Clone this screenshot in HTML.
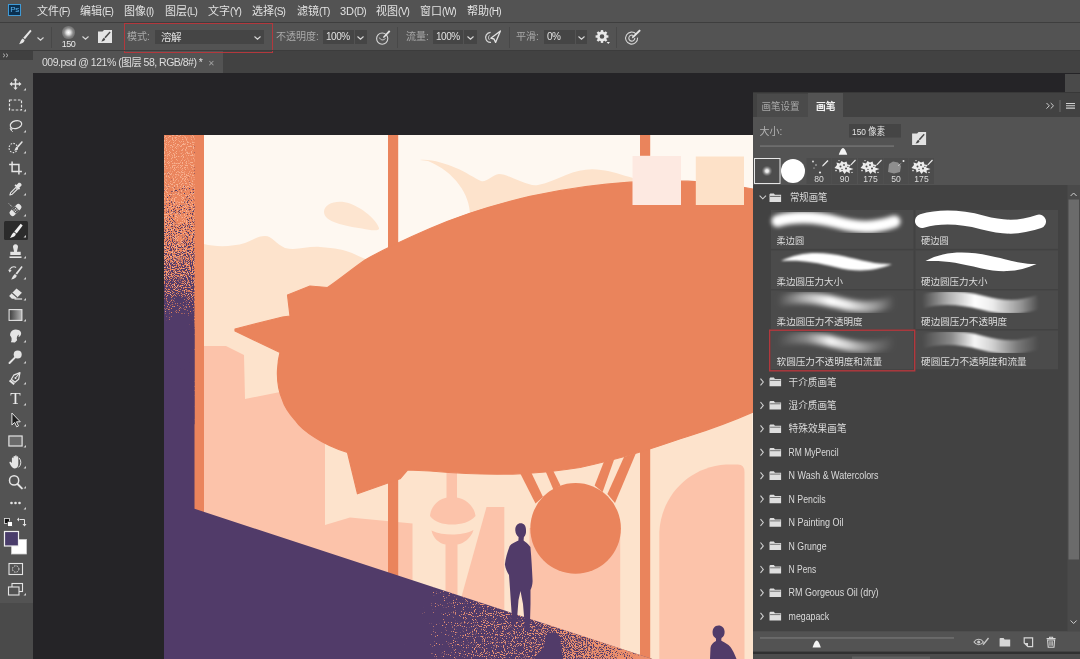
<!DOCTYPE html>
<html lang="zh-CN">
<head>
<meta charset="utf-8">
<title>Photoshop</title>
<style>
html,body{margin:0;padding:0;}
body{width:1080px;height:659px;overflow:hidden;position:relative;background:#252427;
  font-family:"Liberation Sans","Noto Sans CJK SC",sans-serif;font-size:12px;color:#dcdcdc;}
.abs{position:absolute;}
#menubar{will-change:transform;left:0;top:0;width:1080px;height:22px;background:#535353;border-bottom:1px solid #3e3e3e;box-sizing:content-box;}
#menubar span{position:absolute;top:3px;font-size:11px;line-height:16px;color:#e2e2e2;white-space:nowrap;}
#menubar span i{font-style:normal;font-size:10px;letter-spacing:-0.7px;}
#pslogo{left:8px;top:4px;width:13px;height:12px;background:#0b3050;border:1px solid #3f9ad6;box-sizing:border-box;
  color:#59b5f3;font-size:8px;line-height:10px;text-align:center;letter-spacing:-0.4px;}
#optbar{will-change:transform;left:0;top:23px;width:1080px;height:28px;background:#535353;}
#optbar .lbl{position:absolute;top:6px;line-height:16px;font-size:10px;color:#a9a9a9;white-space:nowrap;}
#optbar .fld{position:absolute;top:7px;height:14px;background:#454545;color:#e0e0e0;font-size:10px;letter-spacing:-0.45px;line-height:14px;white-space:nowrap;box-sizing:border-box;padding-left:3px;}
#optbar .sep{position:absolute;top:4px;width:1px;height:21px;background:#484848;}
#tabbar{left:0;top:51px;width:1080px;height:22px;background:#424242;}
#doctab{will-change:transform;left:33px;top:51px;width:190px;height:22px;background:#535353;color:#dedede;font-size:10.5px;letter-spacing:-0.5px;line-height:22px;white-space:nowrap;}
#toolbar{left:0;top:51px;width:33px;height:552px;background:#535353;}
#toolhead{left:0;top:51px;width:33px;height:9px;background:#404040;}
#toolbelow{left:0;top:603px;width:33px;height:56px;background:#4a4a4a;}
#panel{left:753px;top:92px;width:327px;height:567px;background:#535353;will-change:transform;}
body{-webkit-font-smoothing:antialiased;}
</style>
</head>
<body>
<!-- CANVAS ILLUSTRATION -->
<svg id="art" class="abs" style="left:164px;top:135px" width="589" height="524" viewBox="164 135 589 524">
<rect x="164" y="135" width="589" height="524" fill="#fef8f1"/>
<defs>
<linearGradient id="bandg" x1="0" y1="0" x2="0" y2="1" gradientUnits="objectBoundingBox"><stop offset="0" stop-color="#000"/><stop offset="0.1" stop-color="#101010"/><stop offset="0.2" stop-color="#4a4a4a"/><stop offset="0.4" stop-color="#7c7c7c"/><stop offset="0.55" stop-color="#b0b0b0"/><stop offset="0.66" stop-color="#ffffff"/><stop offset="1" stop-color="#ffffff"/></linearGradient>
<linearGradient id="bandl" x1="0" y1="0" x2="0" y2="1" gradientUnits="objectBoundingBox"><stop offset="0" stop-color="#747474"/><stop offset="0.7" stop-color="#787878"/><stop offset="0.9" stop-color="#606060"/><stop offset="1" stop-color="#000"/></linearGradient>
<linearGradient id="floorg" gradientUnits="userSpaceOnUse" x1="415" y1="0" x2="655" y2="0"><stop offset="0" stop-color="#000"/><stop offset="0.08" stop-color="#3a3a3a"/><stop offset="0.28" stop-color="#666666"/><stop offset="0.55" stop-color="#727272"/><stop offset="1" stop-color="#7c7c7c"/></linearGradient>
<linearGradient id="floorg2" gradientUnits="userSpaceOnUse" x1="500" y1="0" x2="655" y2="0"><stop offset="0" stop-color="#000"/><stop offset="0.2" stop-color="#404040"/><stop offset="0.5" stop-color="#808080"/><stop offset="0.8" stop-color="#b8b8b8"/><stop offset="1" stop-color="#e0e0e0"/></linearGradient>
<filter id="disP" x="0" y="0" width="1" height="1" color-interpolation-filters="sRGB">
<feTurbulence type="fractalNoise" baseFrequency="0.95" numOctaves="1" seed="11" result="t"/>
<feColorMatrix in="t" type="matrix" values="-1.6 0 0 0 1.3  -1.6 0 0 0 1.3  -1.6 0 0 0 1.3  0 0 0 0 1" result="inv"/>
<feComposite in="SourceGraphic" in2="inv" operator="arithmetic" k1="0" k2="0.5" k3="0.5" k4="0" result="sum"/>
<feColorMatrix in="sum" type="matrix" values="0 0 0 0 0.318  0 0 0 0 0.231  0 0 0 0 0.412  14 0 0 0 -7"/>
<feComposite in2="SourceAlpha" operator="in"/>
</filter>
<filter id="disL" x="0" y="0" width="1" height="1" color-interpolation-filters="sRGB">
<feTurbulence type="fractalNoise" baseFrequency="0.9" numOctaves="1" seed="4" result="t"/>
<feColorMatrix in="t" type="matrix" values="-1.6 0 0 0 1.3  -1.6 0 0 0 1.3  -1.6 0 0 0 1.3  0 0 0 0 1" result="inv"/>
<feComposite in="SourceGraphic" in2="inv" operator="arithmetic" k1="0" k2="0.5" k3="0.5" k4="0" result="sum"/>
<feColorMatrix in="sum" type="matrix" values="0 0 0 0 0.97  0 0 0 0 0.69  0 0 0 0 0.56  14 0 0 0 -7"/>
<feComposite in2="SourceAlpha" operator="in"/>
</filter>
<filter id="disO" x="0" y="0" width="1" height="1" color-interpolation-filters="sRGB">
<feTurbulence type="fractalNoise" baseFrequency="0.95" numOctaves="1" seed="23" result="t"/>
<feColorMatrix in="t" type="matrix" values="-1.6 0 0 0 1.3  -1.6 0 0 0 1.3  -1.6 0 0 0 1.3  0 0 0 0 1" result="inv"/>
<feComposite in="SourceGraphic" in2="inv" operator="arithmetic" k1="0" k2="0.5" k3="0.5" k4="0" result="sum"/>
<feColorMatrix in="sum" type="matrix" values="0 0 0 0 0.93  0 0 0 0 0.56  0 0 0 0 0.42  14 0 0 0 -7"/>
<feComposite in2="SourceAlpha" operator="in"/>
</filter>
<filter id="disO2" x="0" y="0" width="1" height="1" color-interpolation-filters="sRGB">
<feTurbulence type="fractalNoise" baseFrequency="0.9" numOctaves="1" seed="5" result="t"/>
<feColorMatrix in="t" type="matrix" values="-1.6 0 0 0 1.3  -1.6 0 0 0 1.3  -1.6 0 0 0 1.3  0 0 0 0 1" result="inv"/>
<feComposite in="SourceGraphic" in2="inv" operator="arithmetic" k1="0" k2="0.5" k3="0.5" k4="0" result="sum"/>
<feColorMatrix in="sum" type="matrix" values="0 0 0 0 0.92  0 0 0 0 0.58  0 0 0 0 0.46  14 0 0 0 -7"/>
<feComposite in2="SourceAlpha" operator="in"/>
</filter>
</defs>
<path d="M324 212 C324 203 338 199 350 203.5 C362 208 376 219 379 228 C380 231 372 231 362 228.5 C345 226 324 222 324 212 Z" fill="#fde5d0"/>
<path d="M420 160 C432 159 446 164 456 168 C466 172 474 178 481 181 C486 183 492 175 499 174 C505 174 512 178 520 181 C528 184 533 186 538 185 C548 183 556 179 566 175 C578 170 590 168 601 170 C612 171 622 175 633 178 L633 200 L470 215 C470 195 455 172 428 161 Z" fill="#fde3cc"/>
<path d="M204 244 C215 247 232 247 245 243 C253 240 258 236 265 236 C272 236 276 244 285 248 C296 251 308 246 320 247 C335 248 345 250 352 253 C360 257 368 260 375 262 L420 240 L752.5 380 L753 659 L204 659 Z" fill="#fde3cc"/>
<path d="M204 346 L226 346 L244 355 L245 399 L325 383 L325 600 L204 600 Z" fill="#fcc3aa"/>
<path d="M325 525 L350 517.5 L412.5 523.5 L412.5 600 L325 600 Z" fill="#fcc3aa"/>
<rect x="446.5" y="440" width="10.5" height="60" fill="#fcc3aa"/>
<path d="M430 516 C431 505 440 497 452 497 C464 497 474 505 475.5 516 C470 522.5 461 524.5 452 524.5 C443 524.5 434 522 430 516 Z" fill="#fcc3aa"/>
<path d="M431.5 530.5 C438 533.5 445 534.5 452 534.5 C459 534.5 467 533.5 473.5 530 C471 538 464 543.5 457.5 544.5 L457.5 600 L445.5 600 L445.5 544.5 C439 543.5 433 538 431.5 530.5 Z" fill="#fcc3aa"/>
<path d="M486.5 507 L504.3 507 L504.3 620 L455 620 Z" fill="#fcc3aa"/>
<rect x="529.5" y="528" width="90.7" height="131" fill="#fcc3aa"/>
<path d="M659.3 659 L659.3 532 C661 497 688 467 726 464.6 L738 464.6 Q744.5 465 744.5 472 L744.5 659 Z" fill="#fcc3aa"/>
<rect x="164" y="135" width="40" height="400" fill="#ea845c"/>
<rect x="388" y="135" width="10.2" height="460" fill="#ea845c"/>
<rect x="640" y="135" width="10.2" height="20.8" fill="#ea845c"/>
<rect x="640" y="440" width="10.2" height="219" fill="#ea845c"/>
<path d="M287.5 295 L310 286 L327.5 287.5 C340 279 352 269 365 260 C385 248.5 408 238 430 228.5 C462 214.5 495 204.5 530 196.3 C565 189 600 184 630 182.2 C650 181 670 180.8 688 181.2 C710 182 732 185 753 189 L753 412 C735 420 712 428.5 689 436 C670 442 650 449.5 630 455 C612 460 596 464 580 467.5 C558 471 538 473 517.5 473.8 C490 475 460 473.5 430 471 L407.5 470 L400 478.8 L357.5 493.8 L347.5 452.5 C335 448.5 324 443.5 315 437.5 C306 432 299 426 295 420 C288 412 284 405 282.5 400 C279 392 277 381 277.5 370 C277.8 364 278.5 358 280 352.5 L235 331 L235 329 L282.5 317 L290 316 Z" fill="#ea845c" stroke="#ea845c" stroke-width="1.2" stroke-linejoin="round"/>
<path d="M519.5 472 L531 472 L543 497 L535.5 503.5 Z" fill="#ea845c"/>
<path d="M545.5 471 L552.6 469.5 L560.5 485.5 L553.5 490 Z" fill="#ea845c"/>
<path d="M604 461.5 L614.3 459 L602.6 492 L594.6 485.5 Z" fill="#ea845c"/>
<path d="M624 457 L636 453 L615 503 L607.4 494 Z" fill="#ea845c"/>
<circle cx="575.6" cy="528.4" r="45.3" fill="#ea845c"/>
<rect x="632.5" y="156" width="48.5" height="49" fill="#fde9e1"/>
<rect x="695.8" y="156.5" width="48.2" height="48.5" fill="#fde1c8"/>
<path d="M164 326 L194.5 326 L194.5 508.75 L652.3 659 L164 659 Z" fill="#513b69"/>
<rect x="164" y="135" width="30.5" height="191" fill="url(#bandl)" filter="url(#disL)"/>
<rect x="164" y="135" width="30.5" height="290" fill="url(#bandg)" filter="url(#disP)"/>
<clipPath id="floorclip"><path d="M380 569.6 L652.3 659 L380 659 Z"/></clipPath>
<g clip-path="url(#floorclip)"><rect x="380" y="560" width="273" height="99" fill="url(#floorg)" filter="url(#disO2)"/><rect x="380" y="560" width="273" height="99" fill="url(#floorg2)" filter="url(#disO)"/></g>
<path d="M520.6 523.3 C517.5 523.3 515 526 515.3 530.5 C515.5 533.5 517 536 518.6 537 L518.4 540.5 C515 542 511.5 543.5 509.7 546 C507.5 552 505.5 558 504.9 564.5 C505.5 569 507.5 572.5 509 575 L510 589 L511.2 607 L512 619 L510.5 624.5 L515.5 624.8 L517 619 L518.5 600 L520.5 591 L523 604 L524.5 622 L524 629.8 L529.5 630.2 L530 622 L530.5 604 L530.5 590 C531.5 588 532.5 585 532.6 581 C532 570 531.5 558 530.4 547 C528 543.5 525.5 542 523.6 540.5 L523.9 537 C525.5 535.5 526.3 533 526 530 C526 526 524 523.3 520.6 523.3 Z" fill="#513b69"/>
<path d="M552 632.5 C547 632.5 544.5 637 545 642 C545 646 543 649 538 653 L534 659 L563 659 L562 652 C560.5 648 560.7 644 560.5 640 C560 635 556.5 632.5 552 632.5 Z" fill="#513b69"/>
<path d="M718.6 625.6 C714.5 625.6 712.3 629 712.6 633 C712.6 635.5 714 637 716 638.5 L716 641 C713 642.5 710.8 645 710.5 648 L710 659 L736.5 659 C734 652 731 647 728.5 645 C726 643 723 642 721.2 640.5 L721.5 638 C724 636.5 724.8 634 724.6 631.5 C724.4 628 722 625.6 718.6 625.6 Z" fill="#513b69"/>
</svg>

<!-- MENU BAR -->
<div id="menubar" class="abs">
<div id="pslogo" class="abs">Ps</div>
<span style="left:37px">文件<i>(F)</i></span>
<span style="left:80px">编辑<i>(E)</i></span>
<span style="left:124px">图像<i>(I)</i></span>
<span style="left:165px">图层<i>(L)</i></span>
<span style="left:208px">文字<i>(Y)</i></span>
<span style="left:252px">选择<i>(S)</i></span>
<span style="left:297px">滤镜<i>(T)</i></span>
<span style="left:340px">3D<i>(D)</i></span>
<span style="left:376px">视图<i>(V)</i></span>
<span style="left:420px">窗口<i>(W)</i></span>
<span style="left:467px">帮助<i>(H)</i></span>
</div>

<!-- OPTIONS BAR -->
<div id="optbar" class="abs">

<!-- brush tool icon -->
<svg class="abs" style="left:17px;top:6px" width="16" height="17" viewBox="0 0 16 17">
<path d="M13.2 0.8 L14.6 2 L8 10.2 L6.2 8.8 Z" fill="#e6e6e6"/>
<path d="M5.6 9.4 L7.6 11 C7.4 13.2 5.4 14.6 2 15.2 C3.4 13.8 3.2 11.2 5.6 9.4 Z" fill="#e6e6e6"/>
</svg>
<svg class="abs" style="left:37px;top:14px" width="7" height="4" viewBox="0 0 7 4"><path d="M0.5 0.5 L3.5 3.2 L6.5 0.5" fill="none" stroke="#d8d8d8" stroke-width="1.1"/></svg>
<div class="sep" style="left:51px"></div>
<!-- brush preview -->
<div class="abs" style="left:62px;top:3px;width:12.6px;height:12.6px;border-radius:50%;background:radial-gradient(circle,#ffffff 0%,#e0e0e0 22%,rgba(190,190,190,0.5) 50%,rgba(83,83,83,0) 95%)"></div>
<div class="abs" style="left:58px;top:16px;width:21px;text-align:center;font-size:9px;letter-spacing:-0.5px;line-height:10px;color:#e8e8e8">150</div>
<svg class="abs" style="left:82px;top:13px" width="7" height="4" viewBox="0 0 7 4"><path d="M0.5 0.5 L3.5 3.2 L6.5 0.5" fill="none" stroke="#d8d8d8" stroke-width="1.1"/></svg>
<!-- brush settings icon -->
<svg class="abs" style="left:97px;top:6px" width="16" height="15" viewBox="0 0 16 15">
<path d="M1 2.4 L1 14 L15 14 L15 1 L7 1 L5.6 2.4 Z" fill="#e4e4e4"/>
<path d="M12.6 2.6 L13.6 3.5 L8.6 9.3 L7.4 8.3 Z" fill="#4a4a4a"/>
<path d="M6.9 8.8 L8.2 9.9 C8 11.4 6.6 12.3 4.2 12.6 C5.2 11.6 5.2 10 6.9 8.8 Z" fill="#4a4a4a"/>
</svg>
<!-- red highlight box -->

<span class="lbl" style="left:127px">模式:</span>
<div class="fld" style="left:155px;width:109px;padding-left:6px;font-size:10.5px">溶解</div>
<svg class="abs" style="left:254px;top:13px" width="7" height="4" viewBox="0 0 7 4"><path d="M0.5 0.5 L3.5 3.2 L6.5 0.5" fill="none" stroke="#d8d8d8" stroke-width="1.1"/></svg>
<span class="lbl" style="left:276px">不透明度:</span>
<div class="fld" style="left:323px;width:31px">100%</div>
<div class="fld" style="left:355px;width:12px;padding:0"></div>
<svg class="abs" style="left:357px;top:13px" width="7" height="4" viewBox="0 0 7 4"><path d="M0.5 0.5 L3.5 3.2 L6.5 0.5" fill="none" stroke="#d8d8d8" stroke-width="1.1"/></svg>
<!-- pressure opacity icon -->
<svg class="abs" style="left:375px;top:6px" width="17" height="17" viewBox="0 0 17 17">
<circle cx="7.2" cy="9.6" r="5.6" fill="none" stroke="#d6d6d6" stroke-width="1.1"/>
<path d="M4.4 8.6 C5.6 11.4 8.8 11.6 10.4 9.4" fill="none" stroke="#d6d6d6" stroke-width="1"/>
<path d="M14 1.2 L15.4 2.6 L9.6 8.4 L8 9 L8.6 7.2 Z" fill="#e2e2e2"/>
</svg>
<div class="sep" style="left:397px"></div>
<span class="lbl" style="left:406px">流量:</span>
<div class="fld" style="left:433px;width:30px">100%</div>
<div class="fld" style="left:464px;width:13px;padding:0"></div>
<svg class="abs" style="left:467px;top:13px" width="7" height="4" viewBox="0 0 7 4"><path d="M0.5 0.5 L3.5 3.2 L6.5 0.5" fill="none" stroke="#d8d8d8" stroke-width="1.1"/></svg>
<!-- airbrush icon -->
<svg class="abs" style="left:484px;top:7px" width="18" height="15" viewBox="0 0 18 15">
<path d="M6.6 2.4 C2.6 2.8 0.8 6.4 2 9.4 C2.8 11.6 5 12.6 7 12.4" fill="none" stroke="#d6d6d6" stroke-width="1.2"/>
<path d="M5.4 5.4 C4.2 6.6 4.2 8.6 5.4 9.8" fill="none" stroke="#d6d6d6" stroke-width="1"/>
<path d="M16.4 1 L11.6 12.4 L10 9 L6.8 8.2 Z" fill="none" stroke="#e2e2e2" stroke-width="1.3" stroke-linejoin="round"/>
</svg>
<div class="sep" style="left:509px"></div>
<span class="lbl" style="left:516px">平滑:</span>
<div class="fld" style="left:544px;width:31px">0%</div>
<div class="fld" style="left:576px;width:11px;padding:0"></div>
<svg class="abs" style="left:578px;top:13px" width="7" height="4" viewBox="0 0 7 4"><path d="M0.5 0.5 L3.5 3.2 L6.5 0.5" fill="none" stroke="#d8d8d8" stroke-width="1.1"/></svg>
<!-- gear -->
<svg class="abs" style="left:595px;top:6px" width="16" height="16" viewBox="0 0 16 16">
<g transform="translate(7,7.5)">
<circle r="3.6" fill="none" stroke="#e8e8e8" stroke-width="2.6"/>
<g fill="#e8e8e8">
<rect x="-1.2" y="-6.4" width="2.4" height="2.6"/>
<rect x="-1.2" y="3.8" width="2.4" height="2.6"/>
<rect x="-6.4" y="-1.2" width="2.6" height="2.4"/>
<rect x="3.8" y="-1.2" width="2.6" height="2.4"/>
<rect x="-1.2" y="-6.4" width="2.4" height="2.6" transform="rotate(45)"/>
<rect x="-1.2" y="3.8" width="2.4" height="2.6" transform="rotate(45)"/>
<rect x="-6.4" y="-1.2" width="2.6" height="2.4" transform="rotate(45)"/>
<rect x="3.8" y="-1.2" width="2.6" height="2.4" transform="rotate(45)"/>
</g></g>
<path d="M11.6 13 L15 13 L13.3 15 Z" fill="#e8e8e8"/>
</svg>
<div class="sep" style="left:616px"></div>
<!-- target icon -->
<svg class="abs" style="left:624px;top:5px" width="18" height="18" viewBox="0 0 18 18">
<path d="M12.2 6.2 A6 6 0 1 0 13.6 9.6" fill="none" stroke="#d6d6d6" stroke-width="1.1"/>
<path d="M9.4 7.6 A3 3 0 1 0 10.8 10" fill="none" stroke="#d6d6d6" stroke-width="1.1"/>
<path d="M15.4 1.4 L16.8 2.8 L10 9.6 L7.8 10.4 L8.6 8.2 Z" fill="#e4e4e4"/>
</svg>

</div>

<!-- TAB BAR -->
<div id="tabbar" class="abs"></div>
<div id="doctab" class="abs"><span style="margin-left:9px">009.psd @ 121% (图层 58, RGB/8#) *</span><span style="margin-left:6px;color:#a0a0a0;font-size:8px;letter-spacing:0">✕</span></div>

<div class="abs" style="left:123.5px;top:23px;width:149.5px;height:30px;border:1.5px solid #b3383d;box-sizing:border-box"></div>
<div class="abs" style="left:1065px;top:74px;width:15px;height:18px;background:#4a4a4a"></div>
<div class="abs" style="left:0;top:50px;width:1080px;height:1px;background:#3c3c3c"></div>
<!-- TOOLBAR -->
<div id="toolbar" class="abs"></div>
<div id="toolhead" class="abs"></div>
<div id="toolbelow" class="abs"></div>
<svg class="abs" style="left:0;top:0" width="33" height="659" viewBox="0 0 33 659">
<g transform="translate(15.5,84)"><path d="M0 -6 L2.2 -3.4 L0.7 -3.4 L0.7 -0.7 L3.4 -0.7 L3.4 -2.2 L6 0 L3.4 2.2 L3.4 0.7 L0.7 0.7 L0.7 3.4 L2.2 3.4 L0 6 L-2.2 3.4 L-0.7 3.4 L-0.7 0.7 L-3.4 0.7 L-3.4 2.2 L-6 0 L-3.4 -2.2 L-3.4 -0.7 L-0.7 -0.7 L-0.7 -3.4 L-2.2 -3.4 Z" fill="#e4e4e4"/><path d="M10.5 4 L10.5 6.5 L8 6.5 Z" fill="#cfcfcf"/></g>
<g transform="translate(15.5,105)"><rect x="-6" y="-5" width="12" height="10" fill="none" stroke="#e4e4e4" stroke-width="1.2" stroke-dasharray="2.6 1.6"/><path d="M10.5 4 L10.5 6.5 L8 6.5 Z" fill="#cfcfcf"/></g>
<g transform="translate(15.5,126)"><ellipse cx="0.8" cy="-1.2" rx="5.8" ry="3.8" fill="none" stroke="#e4e4e4" stroke-width="1.2" transform="rotate(-14)"/><path d="M-4.4 1.2 C-6 2.4 -5 4.4 -3.4 3.4 C-2.4 2.6 -3.6 1.4 -4.4 2.2 C-5 3.4 -4.4 5 -2.8 5.6" fill="none" stroke="#e4e4e4" stroke-width="1"/><path d="M10.5 4 L10.5 6.5 L8 6.5 Z" fill="#cfcfcf"/></g>
<g transform="translate(15.5,147)"><ellipse cx="-2.2" cy="1" rx="4.2" ry="4.6" fill="none" stroke="#e4e4e4" stroke-width="1.1" stroke-dasharray="1.6 1.3"/><path d="M6.4 -6 L7.4 -5 L2.8 0.6 L1.4 -0.6 Z" fill="#e4e4e4"/><path d="M1 -0.2 L2.6 1.2 C2.2 2.8 0.6 3.4 -1.4 3.6 C-0.2 2.6 -0.4 1 1 -0.2 Z" fill="#e4e4e4"/><path d="M10.5 4 L10.5 6.5 L8 6.5 Z" fill="#cfcfcf"/></g>
<g transform="translate(15.5,168)"><path d="M-3.4 -6.4 L-3.4 3.4 L6.4 3.4 M-6.4 -3.4 L3.4 -3.4 L3.4 6.4" fill="none" stroke="#e4e4e4" stroke-width="1.5"/><path d="M10.5 4 L10.5 6.5 L8 6.5 Z" fill="#cfcfcf"/></g>
<g transform="translate(15.5,189)"><path d="M3.2 -6.2 C4.6 -7 6.8 -4.8 6 -3.4 L3.8 -1.2 L4.6 -0.4 L3.4 0.8 L-1 -3.6 L0.2 -4.8 L1 -4 Z" fill="#e4e4e4"/><path d="M0.4 -1.6 L2 0 L-3.2 5.2 L-5.6 6 L-4.8 3.6 Z" fill="none" stroke="#e4e4e4" stroke-width="1.1" stroke-linejoin="round"/><path d="M10.5 4 L10.5 6.5 L8 6.5 Z" fill="#cfcfcf"/></g>
<g transform="translate(15.5,210)"><g transform="rotate(-45)"><rect x="-7" y="-3" width="14" height="6" rx="2.6" fill="#e4e4e4"/><rect x="-2.4" y="-3" width="4.8" height="6" fill="#535353"/><circle cx="-1" cy="-1" r="0.6" fill="#e4e4e4"/><circle cx="1" cy="-1" r="0.6" fill="#e4e4e4"/><circle cx="-1" cy="1" r="0.6" fill="#e4e4e4"/><circle cx="1" cy="1" r="0.6" fill="#e4e4e4"/></g><path d="M-6.6 -6.4 L-3.4 -3.2" stroke="#e4e4e4" stroke-width="1" stroke-dasharray="1 1"/><path d="M10.5 4 L10.5 6.5 L8 6.5 Z" fill="#cfcfcf"/></g>
<rect x="4" y="221" width="24" height="19" rx="1.5" fill="#2b2b2b"/>
<g transform="translate(15.5,231)"><path d="M5.2 -7.2 L7.2 -5.6 L1.2 2.4 L-1.2 0.4 Z" fill="#f2f2f2"/><path d="M-1.6 1.2 L0.4 2.8 C0.2 5 -2 6.4 -5.6 7 C-4.2 5.6 -4.2 3 -1.6 1.2 Z" fill="#f2f2f2"/><path d="M10.5 4 L10.5 6.5 L8 6.5 Z" fill="#cfcfcf"/></g>
<g transform="translate(15.5,252)"><path d="M-2.4 -4.6 A2.5 2.5 0 1 1 2.4 -4.6 L1.4 -0.2 L5.2 -0.2 L5.2 3 L-5.2 3 L-5.2 -0.2 L-1.4 -0.2 Z" fill="#e4e4e4"/><rect x="-6" y="4.4" width="12" height="1.6" fill="#e4e4e4"/><path d="M10.5 4 L10.5 6.5 L8 6.5 Z" fill="#cfcfcf"/></g>
<g transform="translate(15.5,273)"><path d="M6 -7 L7.2 -6 L1.6 1.6 L0 0.4 Z" fill="#e4e4e4"/><path d="M-0.6 1 L1.2 2.4 C1 4.6 -1 5.8 -4.4 6.4 C-3 5 -3 2.8 -0.6 1 Z" fill="#e4e4e4"/><path d="M-6 -2 A4.4 4.4 0 0 1 0.6 -5.6" fill="none" stroke="#e4e4e4" stroke-width="1.1"/><path d="M-7.4 -3.2 L-5.8 -0.6 L-3.8 -2.8 Z" fill="#e4e4e4"/><path d="M10.5 4 L10.5 6.5 L8 6.5 Z" fill="#cfcfcf"/></g>
<g transform="translate(15.5,294)"><path d="M1 -5.6 L6.4 -1.2 L0.6 4.8 L-3.6 4.8 L-6.4 2 Z" fill="#e4e4e4"/><path d="M-3.4 -1 L1.8 3.6" stroke="#535353" stroke-width="1.1"/><rect x="-1" y="4.4" width="7.6" height="1.2" fill="#e4e4e4"/><path d="M10.5 4 L10.5 6.5 L8 6.5 Z" fill="#cfcfcf"/></g>
<defs><linearGradient id="tg" x1="0" x2="1"><stop offset="0" stop-color="#3c3c3c"/><stop offset="1" stop-color="#b4b4b4"/></linearGradient></defs>
<g transform="translate(15.5,315)"><rect x="-6.4" y="-5.4" width="12.8" height="10.8" fill="url(#tg)" stroke="#e4e4e4" stroke-width="1.1"/><path d="M10.5 4 L10.5 6.5 L8 6.5 Z" fill="#cfcfcf"/></g>
<g transform="translate(15.5,336)"><path d="M-3.2 -5.6 C-0.6 -7.2 3.4 -6.6 5 -4.6 C6.4 -2.6 5.4 0.2 3 1 L3.4 -1.4 C1.6 -0.2 0.8 1.8 1.6 4.2 L-0.6 6.6 L-4.6 6.2 C-3.4 3.6 -3.6 1.2 -5.4 -0.6 C-5.6 -2.6 -4.8 -4.6 -3.2 -5.6 Z" fill="#e4e4e4"/><path d="M10.5 4 L10.5 6.5 L8 6.5 Z" fill="#cfcfcf"/></g>
<g transform="translate(15.5,357)"><circle cx="2.2" cy="-2.4" r="4" fill="#e4e4e4"/><path d="M-0.4 0.4 L-6 6" stroke="#e4e4e4" stroke-width="2" stroke-linecap="round"/><path d="M10.5 4 L10.5 6.5 L8 6.5 Z" fill="#cfcfcf"/></g>
<g transform="translate(15.5,378)"><g transform="rotate(40)"><path d="M0 -7 L3.2 -1 L2.4 3.6 L-2.4 3.6 L-3.2 -1 Z" fill="none" stroke="#e4e4e4" stroke-width="1.2" stroke-linejoin="round"/><path d="M0 -6.4 L0 -1" stroke="#e4e4e4" stroke-width="1"/><circle cx="0" cy="0" r="1" fill="#e4e4e4"/><rect x="-3" y="4.6" width="6" height="2" fill="#e4e4e4"/></g><path d="M10.5 4 L10.5 6.5 L8 6.5 Z" fill="#cfcfcf"/></g>
<g transform="translate(15.5,399)"><text x="0" y="5.4" text-anchor="middle" font-family="Liberation Serif,serif" font-size="17" fill="#ececec">T</text><path d="M10.5 4 L10.5 6.5 L8 6.5 Z" fill="#cfcfcf"/></g>
<g transform="translate(15.5,420)"><path d="M-3.6 -7 L-3.6 5 L-0.8 2.4 L1.2 6.8 L3 6 L1 1.8 L4.8 1.8 Z" fill="#1e1e1e" stroke="#e4e4e4" stroke-width="1"/><path d="M10.5 4 L10.5 6.5 L8 6.5 Z" fill="#cfcfcf"/></g>
<g transform="translate(15.5,441)"><rect x="-6.6" y="-5" width="13.2" height="10" fill="#6a6a6a" stroke="#e4e4e4" stroke-width="1.2"/><path d="M10.5 4 L10.5 6.5 L8 6.5 Z" fill="#cfcfcf"/></g>
<g transform="translate(15.5,462)"><path d="M-3.6 1 L-3.6 -3.6 C-3.6 -4.8 -2 -4.8 -2 -3.6 L-2 -5.2 C-2 -6.4 -0.4 -6.4 -0.4 -5.2 L-0.4 -5.8 C-0.4 -7 1.2 -7 1.2 -5.8 L1.2 -4.8 C1.2 -6 2.8 -6 2.8 -4.8 L2.8 2 C2.8 4.6 1.6 6.4 -0.6 6.4 C-2.6 6.4 -3.6 5.4 -5 3 L-6 1 C-6.4 0 -5.2 -0.6 -4.4 0.2 Z" fill="#e4e4e4"/><path d="M3.6 -4 A6.5 6.5 0 0 1 3 5.4" fill="none" stroke="#e4e4e4" stroke-width="1"/><path d="M10.5 4 L10.5 6.5 L8 6.5 Z" fill="#cfcfcf"/></g>
<g transform="translate(15.5,482)"><circle cx="-1.4" cy="-1.6" r="4.6" fill="none" stroke="#e4e4e4" stroke-width="1.5"/><path d="M2 2 L6.4 6.4" stroke="#e4e4e4" stroke-width="2" stroke-linecap="round"/><path d="M10.5 4 L10.5 6.5 L8 6.5 Z" fill="#cfcfcf"/></g>
<g transform="translate(15.5,503)"><circle cx="-4" cy="0" r="1.3" fill="#e4e4e4"/><circle cx="0" cy="0" r="1.3" fill="#e4e4e4"/><circle cx="4" cy="0" r="1.3" fill="#e4e4e4"/><path d="M10.5 4 L10.5 6.5 L8 6.5 Z" fill="#cfcfcf"/></g>
<rect x="4.5" y="518.5" width="5" height="5" fill="#111" stroke="#e4e4e4" stroke-width="0.8"/><rect x="7.5" y="521.5" width="5" height="5" fill="#fff" stroke="#222" stroke-width="0.6"/>
<path d="M19.5 519.5 L24.5 519.5 L24.5 525" fill="none" stroke="#e4e4e4" stroke-width="1"/><path d="M19 517.5 L19 521.5 L17 519.5 Z M22.5 524 L26.5 524 L24.5 526.4 Z" fill="#e4e4e4"/>
<rect x="11.5" y="539.5" width="15" height="14.5" fill="#ffffff" stroke="#cfcfcf" stroke-width="0.8"/>
<rect x="4.5" y="531.5" width="14" height="14.5" fill="#4a3d6b" stroke="#f0f0f0" stroke-width="1.2"/>
<rect x="9" y="563.5" width="13.5" height="11" fill="none" stroke="#e4e4e4" stroke-width="1.1"/><circle cx="15.7" cy="569" r="3.2" fill="none" stroke="#e4e4e4" stroke-width="1" stroke-dasharray="1.4 1.2"/>
<rect x="12" y="583.5" width="10.5" height="8" fill="#535353" stroke="#e4e4e4" stroke-width="1.1"/><rect x="8.5" y="587" width="10.5" height="8" fill="#535353" stroke="#e4e4e4" stroke-width="1.1"/><path d="M26 593 L26 595.5 L23.5 595.5 Z" fill="#cfcfcf"/>
<path d="M3 53.6 L5 55.4 L3 57.2 M6 53.6 L8 55.4 L6 57.2" fill="none" stroke="#bdbdbd" stroke-width="0.9"/>
</svg>

<!-- BRUSH PANEL -->
<div id="panel" class="abs">
<svg class="abs" style="left:0;top:0" width="327" height="567" viewBox="753 92 327 567" font-family="Liberation Sans, Noto Sans CJK SC, sans-serif" font-size="9.8">
<defs>
<filter id="soft" x="-10%" y="-60%" width="120%" height="220%"><feGaussianBlur stdDeviation="2"/></filter>
<filter id="soft2" x="-10%" y="-60%" width="120%" height="220%"><feGaussianBlur stdDeviation="1.3"/></filter>
<filter id="soft3" x="-10%" y="-60%" width="120%" height="220%"><feGaussianBlur stdDeviation="2.4"/></filter>
<linearGradient id="fade" x1="0" x2="1" y1="0" y2="0"><stop offset="0" stop-color="#fff" stop-opacity="0"/><stop offset="0.22" stop-color="#fff" stop-opacity="0.55"/><stop offset="0.45" stop-color="#fff" stop-opacity="1"/><stop offset="0.6" stop-color="#fff" stop-opacity="0.9"/><stop offset="0.85" stop-color="#fff" stop-opacity="0.4"/><stop offset="1" stop-color="#fff" stop-opacity="0"/></linearGradient>
<linearGradient id="fade2" x1="0" x2="1" y1="0" y2="0"><stop offset="0" stop-color="#fff" stop-opacity="0"/><stop offset="0.25" stop-color="#fff" stop-opacity="0.35"/><stop offset="0.45" stop-color="#fff" stop-opacity="0.95"/><stop offset="0.6" stop-color="#fff" stop-opacity="0.75"/><stop offset="0.82" stop-color="#fff" stop-opacity="0.25"/><stop offset="1" stop-color="#fff" stop-opacity="0"/></linearGradient>
<radialGradient id="softdot"><stop offset="0" stop-color="#fff"/><stop offset="0.3" stop-color="#eee" stop-opacity="0.9"/><stop offset="1" stop-color="#888" stop-opacity="0"/></radialGradient>
<g id="fold"><path d="M0 1.2 L0 9 L11.6 9 L11.6 1.8 L5.4 1.8 L4.4 0.4 L0.8 0.4 Z" fill="#dedede"/><path d="M0.6 3.2 L11 3.2" stroke="#454545" stroke-width="0.7"/></g>
<path id="chevR" d="M0 0 L2.8 3.4 L0 6.8" fill="none" stroke="#cfcfcf" stroke-width="1.1"/>
</defs>
<rect x="753" y="92" width="327" height="25" fill="#424242"/>
<rect x="753" y="91" width="327" height="2" fill="#383838"/>
<rect x="757" y="94" width="51" height="23" fill="#4a4a4a"/>
<rect x="808" y="93" width="35" height="24" fill="#535353"/>
<text x="761.5" y="110" fill="#a8a8a8" textLength="38" lengthAdjust="spacingAndGlyphs">画笔设置</text>
<text x="816" y="110" fill="#f2f2f2" font-weight="bold" textLength="19.5" lengthAdjust="spacingAndGlyphs">画笔</text>
<path d="M1046.5 103 L1049.3 105.8 L1046.5 108.6 M1050.7 103 L1053.5 105.8 L1050.7 108.6" fill="none" stroke="#d0d0d0" stroke-width="1"/>
<rect x="1059.5" y="100" width="1" height="12" fill="#6a6a6a"/>
<path d="M1066 103.5 H1075 M1066 105.8 H1075 M1066 108.1 H1075" stroke="#d0d0d0" stroke-width="1.1"/>
<text x="759.5" y="135" fill="#b4b4b4" font-size="10">大小:</text>
<rect x="849" y="124" width="52" height="13.5" fill="#454545"/>
<text x="852" y="134.6" fill="#e2e2e2" font-size="9.8" textLength="33" lengthAdjust="spacingAndGlyphs">150 像素</text>
<g transform="translate(911.5,131)"><path d="M0.6 2.4 L0.6 14 L14.6 14 L14.6 1 L7 1 L5.6 2.4 Z" fill="#e2e2e2"/><path d="M12.2 2.8 L13.2 3.7 L8.4 9.3 L7.2 8.3 Z" fill="#4a4a4a"/><path d="M6.7 8.8 L8 9.9 C7.8 11.4 6.4 12.3 4 12.6 C5 11.6 5 10 6.7 8.8 Z" fill="#4a4a4a"/></g>
<rect x="760" y="145.3" width="134" height="1.6" fill="#717171"/>
<path d="M843 148 C844.6 148 846.6 152.6 847.2 154.8 L838.8 154.8 C839.4 152.6 841.4 148 843 148 Z" fill="#f4f4f4"/>
<rect x="754.5" y="158.5" width="25.5" height="25" fill="#4d4d4d" stroke="#e6e6e6" stroke-width="1"/>
<circle cx="767" cy="171" r="5.5" fill="url(#softdot)"/>
<circle cx="793" cy="171" r="12" fill="#ffffff"/>
<rect x="806.5" y="158" width="25" height="26" fill="#4c4c4c"/>
<text x="819" y="182" text-anchor="middle" fill="#dcdcdc" font-size="8.6">80</text>
<g fill="#e8e8e8"><circle cx="813" cy="161.5" r="0.9"/><circle cx="816" cy="165" r="0.7"/><circle cx="820" cy="172.5" r="1.1"/><circle cx="814" cy="168" r="0.6"/><path d="M827.5 160 L828.5 161 L823.5 166 L822 166.6 L822.6 165 Z"/></g>
<rect x="832.0" y="158" width="25" height="26" fill="#4c4c4c"/>
<text x="844.5" y="182" text-anchor="middle" fill="#dcdcdc" font-size="8.6">90</text>
<g fill="#ececec"><path d="M834.5 168 L837.0 165 L836.5 162.5 L840.0 163.5 L841.5 161 L844.0 162.5 L846.5 161.5 L847.5 164.5 L850.5 165 L849.0 167.5 L853.5 169 L849.5 170.5 L850.0 173.5 L846.5 171.5 L844.5 174 L842.5 171 L839.5 172.5 L839.0 169.5 Z"/><circle cx="836.0" cy="170.6" r="0.8"/><circle cx="852.0" cy="172.4" r="0.7"/><circle cx="839.0" cy="160.6" r="0.7"/><path d="M855.1 159.6 L855.9 160.4 L851.5 165 L850.3 165.4 L850.7 164.2 Z"/></g><g fill="#4c4c4c"><circle cx="840.5" cy="166.5" r="1"/><circle cx="844.0" cy="165" r="0.9"/><circle cx="846.0" cy="168.4" r="1"/><circle cx="842.0" cy="169.4" r="0.7"/><circle cx="847.9" cy="166.4" r="0.6"/></g>
<rect x="858.0" y="158" width="25" height="26" fill="#4c4c4c"/>
<text x="870.5" y="182" text-anchor="middle" fill="#dcdcdc" font-size="8.6">175</text>
<g fill="#ececec"><path d="M860.5 168 L863.0 165 L862.5 162.5 L866.0 163.5 L867.5 161 L870.0 162.5 L872.5 161.5 L873.5 164.5 L876.5 165 L875.0 167.5 L879.5 169 L875.5 170.5 L876.0 173.5 L872.5 171.5 L870.5 174 L868.5 171 L865.5 172.5 L865.0 169.5 Z"/><circle cx="862.0" cy="170.6" r="0.8"/><circle cx="878.0" cy="172.4" r="0.7"/><circle cx="865.0" cy="160.6" r="0.7"/><path d="M881.1 159.6 L881.9 160.4 L877.5 165 L876.3 165.4 L876.7 164.2 Z"/></g><g fill="#4c4c4c"><circle cx="866.5" cy="166.5" r="1"/><circle cx="870.0" cy="165" r="0.9"/><circle cx="872.0" cy="168.4" r="1"/><circle cx="868.0" cy="169.4" r="0.7"/><circle cx="873.9" cy="166.4" r="0.6"/></g>
<rect x="883.5" y="158" width="25" height="26" fill="#4c4c4c"/>
<text x="896" y="182" text-anchor="middle" fill="#dcdcdc" font-size="8.6">50</text>
<g fill="#9a9a9a"><path d="M888 172 L889 164 L893 161.5 L898 162.5 L901 166 L900 172 L894 173.5 Z" opacity="0.85"/></g><g fill="#e8e8e8"><circle cx="903.5" cy="161" r="1"/><path d="M902 162.4 L898 165.4 L898.6 166 Z"/></g>
<rect x="909.0" y="158" width="25" height="26" fill="#4c4c4c"/>
<text x="921.5" y="182" text-anchor="middle" fill="#dcdcdc" font-size="8.6">175</text>
<g fill="#ececec"><path d="M911.5 168 L914.0 165 L913.5 162.5 L917.0 163.5 L918.5 161 L921.0 162.5 L923.5 161.5 L924.5 164.5 L927.5 165 L926.0 167.5 L930.5 169 L926.5 170.5 L927.0 173.5 L923.5 171.5 L921.5 174 L919.5 171 L916.5 172.5 L916.0 169.5 Z"/><circle cx="913.0" cy="170.6" r="0.8"/><circle cx="929.0" cy="172.4" r="0.7"/><circle cx="916.0" cy="160.6" r="0.7"/><path d="M932.1 159.6 L932.9 160.4 L928.5 165 L927.3 165.4 L927.7 164.2 Z"/></g><g fill="#4c4c4c"><circle cx="917.5" cy="166.5" r="1"/><circle cx="921.0" cy="165" r="0.9"/><circle cx="923.0" cy="168.4" r="1"/><circle cx="919.0" cy="169.4" r="0.7"/><circle cx="924.9" cy="166.4" r="0.6"/></g>
<rect x="753" y="185" width="327" height="446.5" fill="#424242"/>
<rect x="1067.5" y="185" width="12.5" height="446.5" fill="#4a4a4a"/>
<rect x="1068.5" y="199.5" width="10.5" height="360" fill="#6b6b6b"/>
<path d="M1070.6 196 L1073.6 193 L1076.6 196" fill="none" stroke="#d0d0d0" stroke-width="1"/>
<path d="M1070.6 620.5 L1073.6 623.5 L1076.6 620.5" fill="none" stroke="#d0d0d0" stroke-width="1"/>
<path d="M759.6 195.6 L762.8 198.8 L766 195.6" fill="none" stroke="#d0d0d0" stroke-width="1.1"/>
<g transform="translate(769.5,193)"><path d="M0 1.2 L0 9 L11.6 9 L11.6 1.8 L5.4 1.8 L4.4 0.4 L0.8 0.4 Z" fill="#dedede"/><path d="M0.6 3.4 L11 3.4" stroke="#454545" stroke-width="0.8"/></g>
<text x="790" y="201.4" fill="#dadada" textLength="37.5" lengthAdjust="spacingAndGlyphs">常规画笔</text>
<rect x="771" y="210" width="142.5" height="38.8" fill="#4b4b4b"/>
<rect x="915.5" y="210" width="142.5" height="38.8" fill="#4b4b4b"/>
<rect x="771" y="250.3" width="142.5" height="38.8" fill="#4b4b4b"/>
<rect x="915.5" y="250.3" width="142.5" height="38.8" fill="#4b4b4b"/>
<rect x="771" y="290.3" width="142.5" height="38.8" fill="#4b4b4b"/>
<rect x="915.5" y="290.3" width="142.5" height="38.8" fill="#4b4b4b"/>
<rect x="771" y="330.5" width="142.5" height="38.8" fill="#4b4b4b"/>
<rect x="915.5" y="330.5" width="142.5" height="38.8" fill="#4b4b4b"/>
<path d="M777.5 221.0 C797.0 215.5, 817.0 217.0, 838.0 222.5 S874.0 228.5, 894.5 221.5" fill="none" stroke="#fff" stroke-width="12" stroke-linecap="round" filter="url(#soft)"/>
<text x="776.6" y="244.4" fill="#dcdcdc" font-size="9.6" textLength="27.5" lengthAdjust="spacingAndGlyphs">柔边圆</text>
<path d="M922.0 221.0 C941.5 215.5, 961.5 217.0, 982.5 222.5 S1018.5 228.5, 1039.0 221.5" fill="none" stroke="#fff" stroke-width="14" stroke-linecap="round"/>
<text x="921.1" y="244.4" fill="#dcdcdc" font-size="9.6" textLength="27.5" lengthAdjust="spacingAndGlyphs">硬边圆</text>
<path d="M781.0 261.1 C800.0 251.3, 822.0 251.3, 845.0 256.55 S876.0 264.3, 892.0 264.0 C876.0 270.8, 858.0 272.8, 836.0 267.3 S800.0 259.8, 781.0 261.1 Z" fill="#fff" filter="url(#soft2)"/>
<text x="776.6" y="284.7" fill="#dcdcdc" font-size="9.6" textLength="66.4" lengthAdjust="spacingAndGlyphs">柔边圆压力大小</text>
<path d="M925.5 261.1 C944.5 250.70000000000002, 966.5 251.0, 989.5 255.72500000000002 S1020.5 264.3, 1036.5 264.0 C1020.5 271.40000000000003, 1002.5 273.55, 980.5 268.2 S944.5 260.25, 925.5 261.1 Z" fill="#fff"/>
<text x="921.1" y="284.7" fill="#dcdcdc" font-size="9.6" textLength="66.4" lengthAdjust="spacingAndGlyphs">硬边圆压力大小</text>
<path d="M777.5 301.3 C797.0 295.8, 817.0 297.3, 838.0 302.8 S874.0 308.8, 894.5 301.8" fill="none" stroke="url(#fade)" stroke-width="11" filter="url(#soft3)"/>
<text x="776.6" y="324.7" fill="#dcdcdc" font-size="9.6" textLength="86" lengthAdjust="spacingAndGlyphs">柔边圆压力不透明度</text>
<path d="M922.0 301.3 C941.5 295.8, 961.5 297.3, 982.5 302.8 S1018.5 308.8, 1039.0 301.8" fill="none" stroke="url(#fade)" stroke-width="14" filter="url(#soft2)"/>
<text x="921.1" y="324.7" fill="#dcdcdc" font-size="9.6" textLength="86" lengthAdjust="spacingAndGlyphs">硬边圆压力不透明度</text>
<path d="M777.5 341.5 C797.0 336.0, 817.0 337.5, 838.0 343.0 S874.0 349.0, 894.5 342.0" fill="none" stroke="url(#fade2)" stroke-width="11" filter="url(#soft3)"/>
<text x="776.6" y="364.9" fill="#dcdcdc" font-size="9.6" textLength="105.5" lengthAdjust="spacingAndGlyphs">软圆压力不透明度和流量</text>
<path d="M922.0 341.5 C941.5 336.0, 961.5 337.5, 982.5 343.0 S1018.5 349.0, 1039.0 342.0" fill="none" stroke="url(#fade2)" stroke-width="14" filter="url(#soft2)"/>
<text x="921.1" y="364.9" fill="#dcdcdc" font-size="9.6" textLength="105.5" lengthAdjust="spacingAndGlyphs">硬圆压力不透明度和流量</text>
<rect x="769.7" y="330.2" width="145" height="40.6" fill="none" stroke="#b3383d" stroke-width="1.4"/>
<use href="#chevR" x="760.5" y="378.6"/>
<use href="#fold" x="769.5" y="377.2"/>
<text x="788.6" y="385.6" fill="#dadada" font-size="9.8" textLength="48" lengthAdjust="spacingAndGlyphs">干介质画笔</text>
<use href="#chevR" x="760.5" y="402.0"/>
<use href="#fold" x="769.5" y="400.6"/>
<text x="788.6" y="409.0" fill="#dadada" font-size="9.8" textLength="48" lengthAdjust="spacingAndGlyphs">湿介质画笔</text>
<use href="#chevR" x="760.5" y="425.4"/>
<use href="#fold" x="769.5" y="424.0"/>
<text x="788.6" y="432.4" fill="#dadada" font-size="9.8" textLength="58" lengthAdjust="spacingAndGlyphs">特殊效果画笔</text>
<use href="#chevR" x="760.5" y="448.9"/>
<use href="#fold" x="769.5" y="447.5"/>
<text x="788.6" y="455.9" fill="#dadada" font-size="10.6" textLength="50" lengthAdjust="spacingAndGlyphs">RM MyPencil</text>
<use href="#chevR" x="760.5" y="472.3"/>
<use href="#fold" x="769.5" y="470.9"/>
<text x="788.6" y="479.3" fill="#dadada" font-size="10.6" textLength="90" lengthAdjust="spacingAndGlyphs">N Wash &amp; Watercolors</text>
<use href="#chevR" x="760.5" y="495.7"/>
<use href="#fold" x="769.5" y="494.3"/>
<text x="788.6" y="502.7" fill="#dadada" font-size="10.6" textLength="37" lengthAdjust="spacingAndGlyphs">N Pencils</text>
<use href="#chevR" x="760.5" y="519.1"/>
<use href="#fold" x="769.5" y="517.7"/>
<text x="788.6" y="526.1" fill="#dadada" font-size="10.6" textLength="55" lengthAdjust="spacingAndGlyphs">N Painting Oil</text>
<use href="#chevR" x="760.5" y="542.5"/>
<use href="#fold" x="769.5" y="541.1"/>
<text x="788.6" y="549.5" fill="#dadada" font-size="10.6" textLength="38" lengthAdjust="spacingAndGlyphs">N Grunge</text>
<use href="#chevR" x="760.5" y="566.0"/>
<use href="#fold" x="769.5" y="564.6"/>
<text x="788.6" y="573.0" fill="#dadada" font-size="10.6" textLength="27.7" lengthAdjust="spacingAndGlyphs">N Pens</text>
<use href="#chevR" x="760.5" y="589.4"/>
<use href="#fold" x="769.5" y="588.0"/>
<text x="788.6" y="596.4" fill="#dadada" font-size="10.6" textLength="90" lengthAdjust="spacingAndGlyphs">RM Gorgeous Oil (dry)</text>
<use href="#chevR" x="760.5" y="612.8"/>
<use href="#fold" x="769.5" y="611.4"/>
<text x="788.6" y="619.8" fill="#dadada" font-size="10.6" textLength="40.5" lengthAdjust="spacingAndGlyphs">megapack</text>
<rect x="753" y="631.5" width="327" height="27.5" fill="#535353"/>
<rect x="760" y="637.2" width="194" height="1.5" fill="#717171"/>
<path d="M816.7 640.6 C818.2 640.6 820.2 645.2 820.8 647.6 L812.6 647.6 C813.2 645.2 815.2 640.6 816.7 640.6 Z" fill="#f4f4f4"/>
<g transform="translate(974,637)"><path d="M0 5 C2.4 1.4 7 1.4 9.4 5 C7 8.6 2.4 8.6 0 5 Z" fill="none" stroke="#c8c8c8" stroke-width="1.1"/><circle cx="4.7" cy="5" r="1.6" fill="#c8c8c8"/><path d="M14 0.6 L15 1.6 L10.2 7.6 L8.6 8.4 L9.2 6.6 Z" fill="#c8c8c8"/></g>
<g transform="translate(999.6,637.6)"><path d="M0 1 L0 9 L10.6 9 L10.6 1.8 L5 1.8 L4 0.4 L0.8 0.4 Z" fill="#d6d6d6"/></g>
<g transform="translate(1023.6,637.2)"><path d="M0.6 0.6 L9 0.6 L9 9.4 L4.4 9.4 L0.6 5.8 Z" fill="none" stroke="#d6d6d6" stroke-width="1.2"/><path d="M0.6 5.8 L4.4 5.8 L4.4 9.4 Z" fill="#d6d6d6"/></g>
<g transform="translate(1046.6,636.6)"><path d="M0 2 H9 M3 2 V0.6 H6 V2" fill="none" stroke="#d6d6d6" stroke-width="1.1"/><path d="M1 3.4 L1.6 10.6 L7.4 10.6 L8 3.4 Z" fill="none" stroke="#d6d6d6" stroke-width="1.1"/><path d="M3.2 4.6 V9.2 M4.5 4.6 V9.2 M5.8 4.6 V9.2" stroke="#d6d6d6" stroke-width="0.8"/></g>
<rect x="753" y="651.6" width="327" height="2.4" fill="#303030"/><rect x="753" y="654" width="327" height="5" fill="#4c4c4c"/><rect x="852" y="656.5" width="78" height="2.5" fill="#707070" opacity="0.6"/>
</svg>
</div>
</body>
</html>
